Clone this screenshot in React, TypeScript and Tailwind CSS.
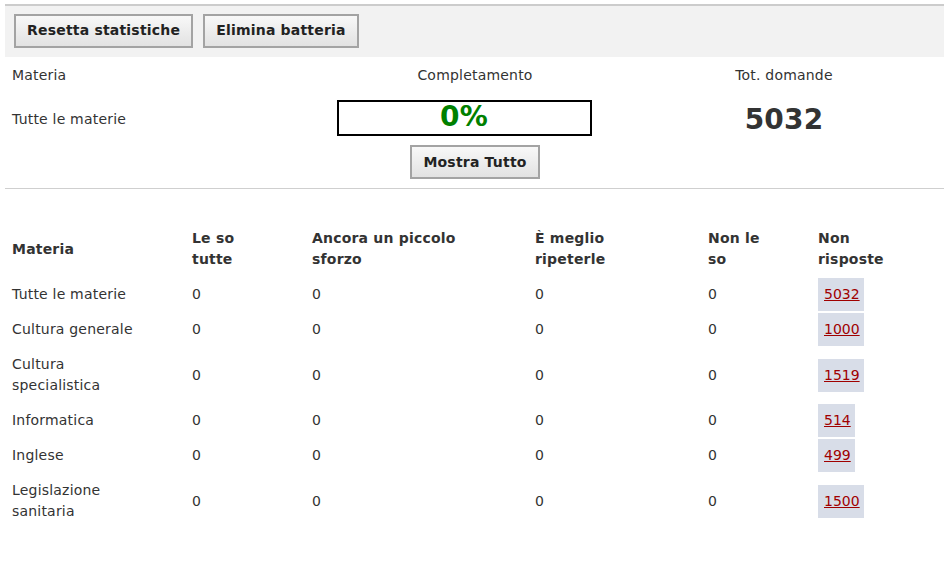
import React from 'react';

const rows = [
  { name: ['Tutte le materie'], total: 5032 },
  { name: ['Cultura generale'], total: 1000 },
  { name: ['Cultura', 'specialistica'], total: 1519 },
  { name: ['Informatica'], total: 514 },
  { name: ['Inglese'], total: 499 },
  { name: ['Legislazione', 'sanitaria'], total: 1500 },
];

const cols = 'grid grid-cols-[180px_120px_223px_173px_110px_1fr] gap-y-[2px] items-center';

function Button({ children }: { children: React.ReactNode }) {
  return (
    <button className="h-[34px] px-[11px] border-2 border-[#a3a3a3] bg-gradient-to-b from-[#f8f8f8] to-[#e2e2e2] font-bold text-[14px] tracking-[0.2px] text-[#222]">
      {children}
    </button>
  );
}

export default function App() {
  return (
    <div className="min-h-[566px] bg-white text-[14px] leading-[21px] tracking-[0.2px] text-[#333] font-['DejaVu_Sans',sans-serif] px-[5px] pt-[4px]">
      <div className="border-t-2 border-[#cccccc] bg-[#f2f2f2] h-[53px] flex items-center gap-[10px] px-[9px] pb-[2px]">
        <Button>Resetta statistiche</Button>
        <Button>Elimina batteria</Button>
      </div>

      <div className="grid grid-cols-[253px_420px_1fr] px-[7px] pt-[8px] pb-[9px] border-b border-[#cfcfcf]">
        <div>
          <div className="h-[21px]">Materia</div>
          <div className="mt-[23px]">Tutte le materie</div>
        </div>
        <div className="flex flex-col items-center">
          <div className="h-[21px]">Completamento</div>
          <div className="mt-[14px] mr-[22px] w-[255px] h-[36px] border-2 border-black flex items-center justify-center">
            <span className="text-[28px] font-bold text-[#008000] leading-none -mt-[3px]">0%</span>
          </div>
          <div className="mt-[9px]">
            <Button>Mostra Tutto</Button>
          </div>
        </div>
        <div className="flex flex-col items-center pr-[54px]">
          <div className="h-[21px]">Tot. domande</div>
          <div className="mt-[18px] text-[28px] leading-[32px] font-bold">5032</div>
        </div>
      </div>

      <div className="px-[7px] pt-[33px]">
        <div className={cols + ' font-bold'}>
          <div className="py-[6px]">Materia</div>
          <div className="py-[6px]">Le so<br />tutte</div>
          <div className="py-[6px]">Ancora un piccolo<br />sforzo</div>
          <div className="py-[6px]">È meglio<br />ripeterle</div>
          <div className="py-[6px]">Non le<br />so</div>
          <div className="py-[6px]">Non<br />risposte</div>
        </div>
        <div className={cols + ' mt-[2px]'}>
          {rows.map((r) => (
            <React.Fragment key={r.name.join(' ')}>
              <div className="py-[6px]">
                {r.name.map((line) => (
                  <div key={line}>{line}</div>
                ))}
              </div>
              <div>0</div>
              <div>0</div>
              <div>0</div>
              <div>0</div>
              <div>
                <a href="#" className="inline-block bg-[#d8dde8] pl-[6px] pr-[4px] py-[6px] tracking-normal text-[#a00000] underline">
                  {r.total}
                </a>
              </div>
            </React.Fragment>
          ))}
        </div>
      </div>
    </div>
  );
}
